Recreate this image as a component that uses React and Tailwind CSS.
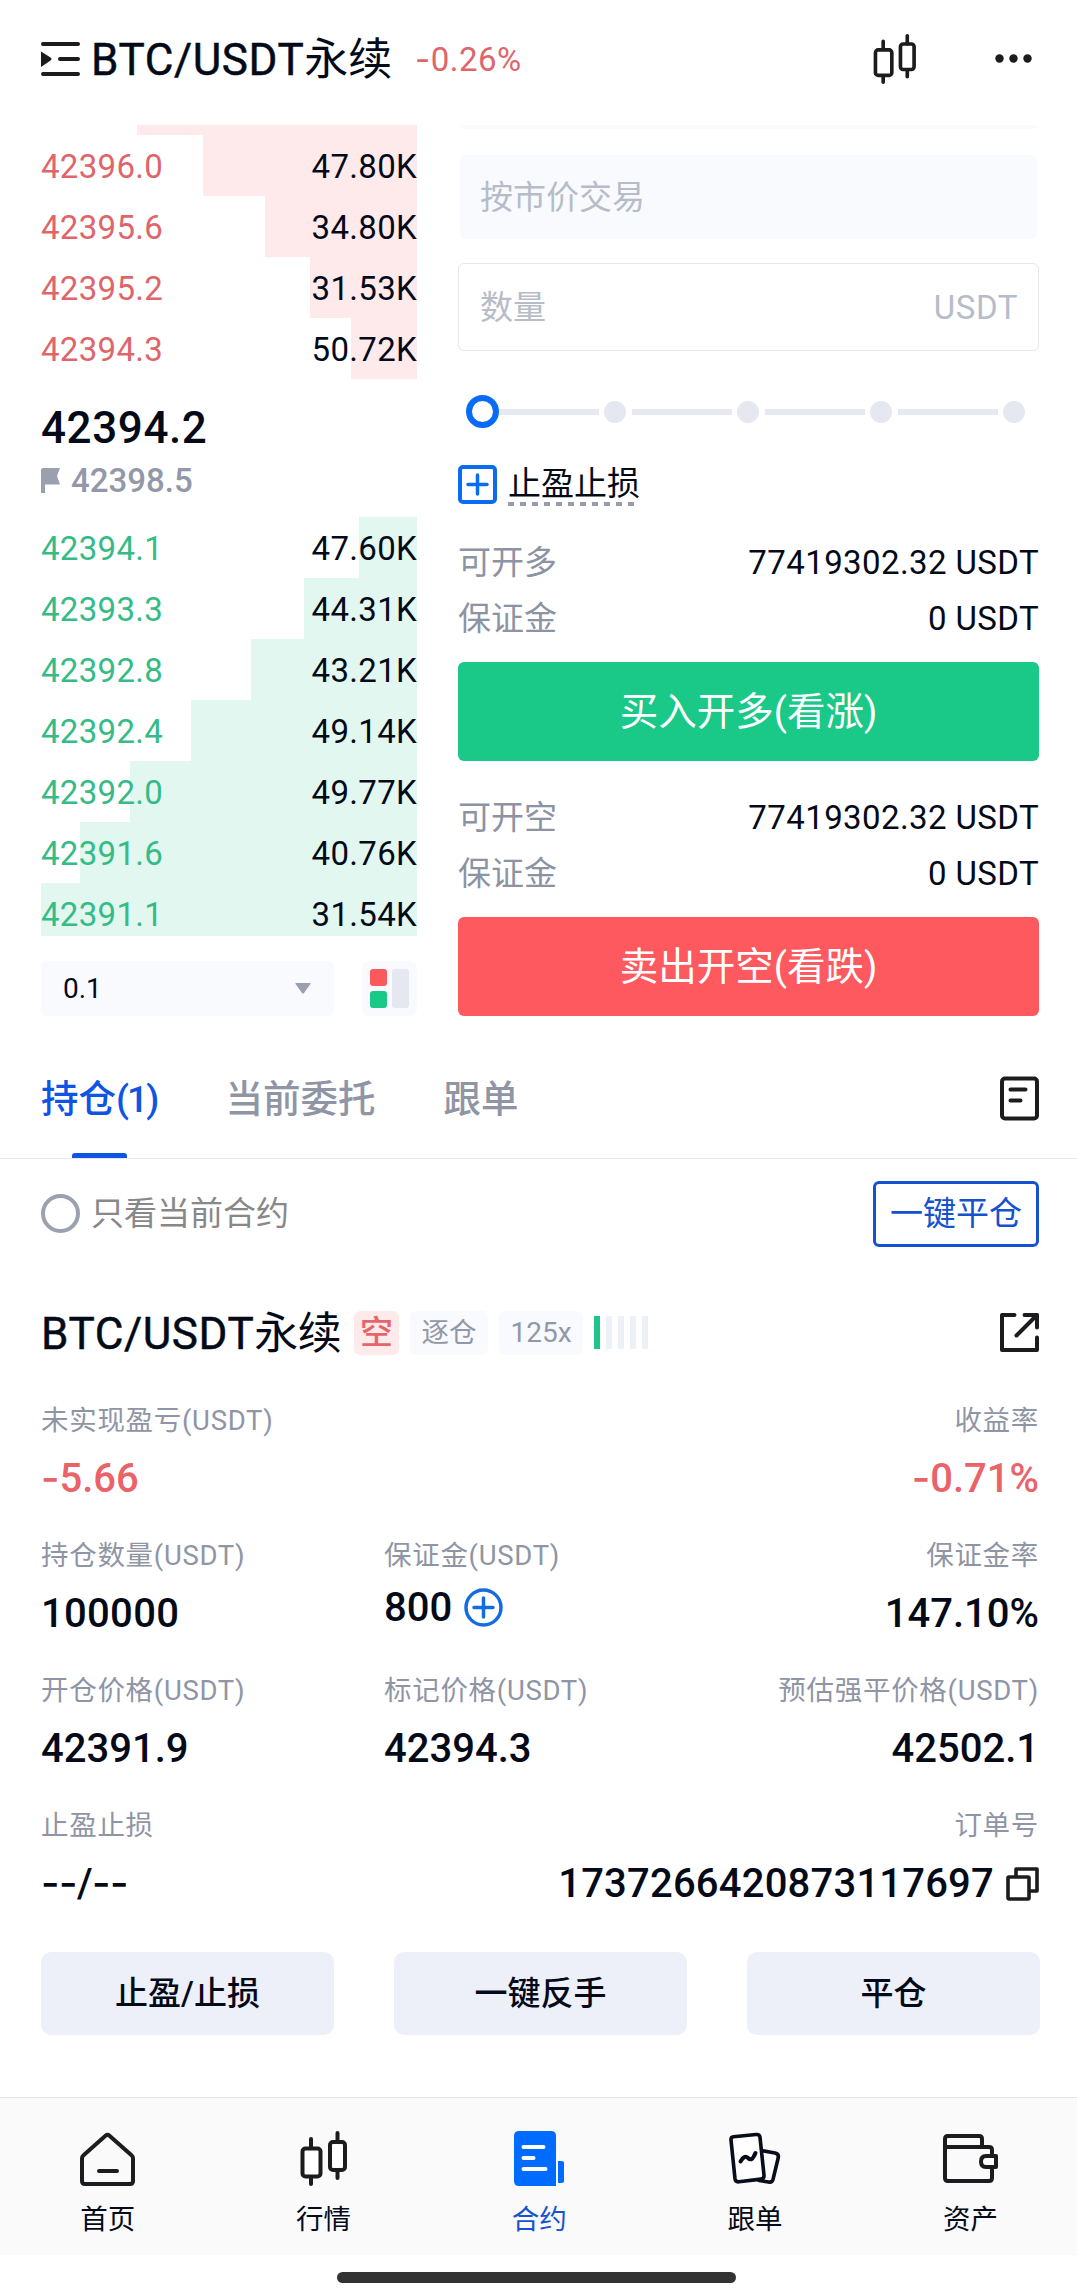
import React, { useState } from "react";

const asks = [
  { price: "42396.0", amount: "47.80K", depth: 214 },
  { price: "42395.6", amount: "34.80K", depth: 152 },
  { price: "42395.2", amount: "31.53K", depth: 107 },
  { price: "42394.3", amount: "50.72K", depth: 66 },
];

const bids = [
  { price: "42394.1", amount: "47.60K", depth: 58 },
  { price: "42393.3", amount: "44.31K", depth: 113 },
  { price: "42392.8", amount: "43.21K", depth: 166 },
  { price: "42392.4", amount: "49.14K", depth: 226 },
  { price: "42392.0", amount: "49.77K", depth: 287 },
  { price: "42391.6", amount: "40.76K", depth: 337 },
  { price: "42391.1", amount: "31.54K", depth: 376 },
];

const tabs = [{ name: "持仓", count: 1 }, { name: "当前委托" }, { name: "跟单" }];

function Candles({ className, fill = "none" }) {
  return (
    <svg viewBox="0 0 48 55" className={className} fill={fill} stroke="#1c1c1e" strokeWidth="4" strokeLinecap="round">
      <path d="M11 8v9M11 46v7M37.500 2v9M37.500 40v7" />
      <rect x="2.500" y="17.500" width="18" height="28" rx="3" />
      <rect x="30" y="11" width="15" height="28" rx="3" />
    </svg>
  );
}

// Inter has a wider hyphen than Roboto
function Dash({ children = "-" }) {
  return <span className="font-['Inter']">{children}</span>;
}

function BookRow({ row, side }) {
  const isAsk = side === "ask";
  return (
    <div className="relative h-[61px] pt-[2px] shrink-0 flex items-center justify-between tracking-[0.3px]">
      <div
        className={`absolute right-0 inset-y-0 ${isAsk ? "bg-[#ffeaeb]" : "bg-[#e2f7f0]"}`}
        style={{ width: row.depth }}
      />
      <span className={`relative ${isAsk ? "text-[#e0656a]" : "text-[#35bb86]"}`}>{row.price}</span>
      <span className="relative">{row.amount}</span>
    </div>
  );
}

function OrderBook() {
  return (
    <div className="w-[376px] shrink-0">
      <div className="h-[10px] w-[280px] ml-auto bg-[#ffeaeb]" />
      {asks.map((row) => (
        <BookRow key={row.price} row={row} side="ask" />
      ))}

      <div className="h-[138px] pt-[21px]">
        <div className="text-[44px] leading-[56px] font-medium tracking-[0.6px]">42394.2</div>
        <div className="flex items-center h-[49px] text-[#9298a7] font-medium">
          <svg viewBox="0 0 19 25" className="w-[19px] h-[25px] mr-[11px]" fill="#9aa0ae">
            <path d="M2 0h17l-3 8 3 8.500H4V23a2 2 0 0 1-4 2V2a2 2 0 0 1 2-2z" />
          </svg>
          42398.5
        </div>
      </div>

      <div className="h-[419px] overflow-hidden">
        {bids.map((row) => (
          <BookRow key={row.price} row={row} side="bid" />
        ))}
      </div>

      <div className="mt-[25px] flex justify-between">
        <button className="w-[293px] h-[55px] rounded-md bg-[#f9fafe] pl-[22px] pr-[23px] flex items-center justify-between text-[28px]">
          0.1
          <svg viewBox="0 0 16 11" className="w-4 h-[11px]" fill="#9aa0ae">
            <path d="M1 0h14q1 0 .5 1L9 10q-1 1-2 0L.5 1Q0 0 1 0z" />
          </svg>
        </button>
        <button className="w-[55px] h-[55px] rounded-lg bg-[#f9fafe] p-2 flex gap-[5px]">
          <span className="flex flex-col gap-[5px]">
            <span className="w-[17px] h-[17px] rounded-[3px] bg-[#fc595f]" />
            <span className="w-[17px] h-[17px] rounded-[3px] bg-[#1ac887]" />
          </span>
          <span className="w-[17px] h-[39px] rounded-[3px] bg-[#e5e8f1]" />
        </button>
      </div>
    </div>
  );
}

function InfoRow({ label, value }) {
  return (
    <div className="h-14 flex items-center justify-between">
      <span className="text-[#8c93a3]">{label}</span>
      <span className="tracking-[0.4px]">{value}</span>
    </div>
  );
}

function TradeForm() {
  return (
    <div className="flex-1 ml-[41px]">
      <div className="h-1 mx-[2px] rounded-b-md bg-[#f9fafe]" />
      <div className="mt-[26px] h-[84px] mx-[2px] px-5 rounded-md bg-[#f9fafe] flex items-center text-[#b6bcc8]">
        按市价交易
      </div>
      <div className="mt-6 h-[88px] pl-[21px] pr-5 rounded-md border border-[#e6e8ea] flex items-center justify-between text-[#b6bcc8]">
        <span>数量</span>
        <span className="tracking-[0.6px]">USDT</span>
      </div>

      {/* Leverage slider */}
      <div className="mt-11 h-[33px] ml-2 mr-[14px] flex items-center">
        <span className="w-[33px] h-[33px] rounded-full border-[6px] border-[#0a6cf5] bg-white" />
        {[0, 1, 2, 3].map((i) => (
          <React.Fragment key={i}>
            <span className={`flex-1 h-[6px] bg-[#e6e9f2] mr-[5px] ${i > 0 ? "ml-[6px]" : ""}`} />
            <span className="w-[22px] h-[22px] rounded-full bg-[#e5e8f1]" />
          </React.Fragment>
        ))}
      </div>

      <div className="mt-[37px] h-[39px] flex items-start">
        <svg viewBox="0 0 39 39" className="w-[39px] h-[39px] mr-[11px]" fill="none" stroke="#0a6cf0" strokeWidth="4">
          <rect x="2" y="2" width="35" height="35" rx="3" />
          <path d="M19.500 10v19M10 19.500h19" strokeWidth="3.500" strokeLinecap="round" />
        </svg>
        <div>
          <div className="leading-[37px]">止盈止损</div>
          <svg viewBox="0 0 130 4" className="block w-[130px] h-1" stroke="#979dab" strokeWidth="4">
            <path d="M0 2h129" strokeDasharray="6 6" />
          </svg>
        </div>
      </div>

      <div className="mt-[30px]">
        <InfoRow label="可开多" value="77419302.32 USDT" />
        <InfoRow label="保证金" value="0 USDT" />
      </div>
      <button className="mt-4 pt-[2px] block w-full h-[99px] rounded-md bg-[#1ac887] text-white text-[38.5px]">
        买入开多(看涨)
      </button>
      <div className="mt-7">
        <InfoRow label="可开空" value="77419302.32 USDT" />
        <InfoRow label="保证金" value="0 USDT" />
      </div>
      <button className="mt-4 pt-[2px] block w-full h-[99px] rounded-md bg-[#fd595f] text-white text-[38.5px]">
        卖出开空(看跌)
      </button>
    </div>
  );
}

function Cell({ label, children, className = "", valueClass = "" }) {
  return (
    <div className={`flex flex-col whitespace-nowrap ${className}`}>
      <span className="h-12 leading-[48px] text-[27.5px] tracking-[0.7px] text-[#8f95a5]">{label}</span>
      <span className={`flex items-center text-[40px] font-medium leading-none ${valueClass || "h-[67px]"}`}>
        {children}
      </span>
    </div>
  );
}

function Position() {
  return (
    <div className="pl-[41px] pr-[38px]">
      <div className="h-[129px] flex items-center">
        <span className="pt-[2px] text-[44px] tracking-[0.6px] leading-none [-webkit-text-stroke:0.5px]">
          BTC/USDT<span className="tracking-[-0.5px] [-webkit-text-stroke:0]">永续</span>
        </span>
        <span className="ml-auto w-[45px] h-11 rounded-md bg-[#ffeaeb] text-[#e5656a] font-medium flex items-center justify-center">
          空
        </span>
        <div className="w-[640px] flex items-center">
          <span className="ml-[11px] w-[78px] h-11 rounded-md bg-[#f9fafe] text-[#9298a7] text-[27.5px] flex items-center justify-center">
            逐仓
          </span>
          <span className="ml-[11px] w-[84px] h-11 rounded-md bg-[#f9fafe] text-[#9298a7] text-[28px] flex items-center justify-center">
            125x
          </span>
          <span className="ml-[11px] flex gap-[6px]">
            <span className="w-[6px] h-[33px] bg-[#1fc488]" />
            {[1, 2, 3, 4].map((i) => (
              <span key={i} className="w-[6px] h-[33px] bg-[#eef0f7]" />
            ))}
          </span>
          <svg viewBox="0 0 39 39" className="w-[39px] h-[39px] ml-auto" fill="none" stroke="#1c1c1e" strokeWidth="4" strokeLinecap="round" strokeLinejoin="round">
            <path d="M14.500 2H2v35h35V24.500" />
            <path d="M24.500 2H37v12.500M37 2 16.500 22.500" />
          </svg>
        </div>
      </div>

      <div className="h-[135px] flex justify-between">
        <Cell label="未实现盈亏(USDT)">
          <span className="text-[#e96368]"><Dash />5.66</span>
        </Cell>
        <Cell label="收益率" className="items-end">
          <span className="text-[#e96368]"><Dash />0.71%</span>
        </Cell>
      </div>
      <div className="h-[135px] flex">
        <Cell label="持仓数量(USDT)" className="w-[343px]">
          <span className="tracking-[0.3px]">100000</span>
        </Cell>
        <Cell label="保证金(USDT)" className="flex-1" valueClass="h-[54px]">
          <span className="pt-px">800</span>
          <svg viewBox="0 0 39 39" className="w-[39px] h-[39px] ml-[12px]" fill="none" stroke="#156be0" strokeWidth="3.500">
            <circle cx="19.500" cy="19.500" r="17.500" />
            <path d="M19.500 10v19M10 19.500h19" strokeLinecap="round" />
          </svg>
        </Cell>
        <Cell label="保证金率" className="items-end">147.10%</Cell>
      </div>
      <div className="h-[135px] flex">
        <Cell label="开仓价格(USDT)" className="w-[343px]">42391.9</Cell>
        <Cell label="标记价格(USDT)" className="flex-1">42394.3</Cell>
        <Cell label="预估强平价格(USDT)" className="items-end">42502.1</Cell>
      </div>
      <div className="h-[135px] flex justify-between">
        <Cell label="止盈止损">
          <span className="tracking-[-0.5px]"><Dash>--</Dash>/<Dash>--</Dash></span>
        </Cell>
        <Cell label="订单号" className="items-end">
          <span className="tracking-[0.2px]">1737266420873117697</span>
          <svg viewBox="0 0 33 34" className="w-[33px] h-[34px] ml-[12px]" fill="none" stroke="#1c1c1e" strokeWidth="3.600" strokeLinejoin="round">
            <rect x="2" y="10" width="21" height="22" rx="1" />
            <path d="M10 10V2h21v22h-8" />
          </svg>
        </Cell>
      </div>

      <div className="mt-[15px] -mr-px flex justify-between">
        {["止盈/止损", "一键反手", "平仓"].map((label) => (
          <button key={label} className="w-[293px] h-[83px] rounded-[10px] bg-[#edf0f8] font-medium">
            {label}
          </button>
        ))}
      </div>
    </div>
  );
}

function NavItem({ label, active, children }) {
  return (
    <button className={`w-[215.7px] shrink-0 pt-[33px] flex flex-col items-center ${active ? "text-[#1652d0]" : ""}`}>
      {children}
      <span className="mt-[15px] text-[27.5px] leading-[38px]">{label}</span>
    </button>
  );
}

function BottomNav() {
  return (
    <nav className="mt-[62px] h-[158px] border-t border-[#e5e7ea] bg-[#fafafb] flex">
      <NavItem label="首页">
        <svg viewBox="0 0 55 55" className="w-[55px] h-[55px]" fill="none" stroke="#1c1c1e" strokeWidth="4" strokeLinejoin="round" strokeLinecap="round">
          <path d="M2 27.500q0-2 1.500-3.200L25.500 4.700q2-1.700 4 0L51.500 24.300Q53 25.500 53 27.500V50q0 3-3 3H5q-3 0-3-3z" />
          <path d="M19 40h18" />
        </svg>
      </NavItem>
      <NavItem label="行情">
        <Candles className="w-12 h-[55px]" fill="#fff" />
      </NavItem>
      <NavItem label="合约" active>
        <svg viewBox="0 0 50 55" className="w-[50px] h-[55px]" fill="#006bff">
          <path d="M5 0h32q5 0 5 5v50H5q-5 0-5-5V5q0-5 5-5z" />
          <path d="M44 30h3q4 0 4 4v14q0 4-4 4h-3z" />
          <path d="M9.500 16h20M9.500 27h10M9.500 38h22" stroke="#fff" strokeWidth="4" strokeLinecap="round" />
        </svg>
      </NavItem>
      <NavItem label="跟单">
        <svg viewBox="0 0 52 55" className="w-[52px] h-[55px]" stroke="#090d1a" strokeWidth="3.600" strokeLinejoin="round" strokeLinecap="round">
          <path d="M32 19.500 46 22q4 1 3.300 4.500L44 48.500Q43 51.800 39.500 51L30 49.500" fill="none" />
          <path d="M4.500 5.800 27 3.500q3.500-.4 4 2.800l4 38q.3 3.400-3 3.800L10 50.800q-3.500.4-4-3L2 9q-.3-2.800 2.500-3.200z" fill="#fff" />
          <path d="M11.500 30.500q4-7 7.500-3.500t6-2l1.500-3" fill="none" strokeWidth="4" />
        </svg>
      </NavItem>
      <NavItem label="资产">
        <svg viewBox="0 0 55 55" className="w-[55px] h-[55px]" fill="none" stroke="#1c1c1e" strokeWidth="4" strokeLinejoin="round" strokeLinecap="round">
          <path d="M2 16V8q0-3 3-3h31q3 0 3 3v8" />
          <path d="M49 24v-5q0-3-3-3H2v31q0 3 3 3h41q3 0 3-3V37" />
          <path d="M53 25H43q-5 0-5 5.500t5 5.500h10z" fill="#fff" />
        </svg>
      </NavItem>
    </nav>
  );
}

export default function App() {
  const [activeTab, setActiveTab] = useState(0);

  return (
    <div className="w-[1077px] h-[2294px] bg-white overflow-hidden text-[33px] leading-none text-[#050a18] font-['Roboto','Noto_Sans_CJK_SC',sans-serif]">
      {/* Header */}
      <header className="h-[117px] mb-2 pl-[41px] pr-[45px] flex items-center">
        <svg viewBox="0 0 39 34" className="w-[39px] h-[34px]" fill="none" stroke="#1c1c1e" strokeWidth="4" strokeLinecap="round">
          <path d="M2 2h35M19 17h18M2 32h35" />
          <path d="M0 9.500 9.500 15.500q2 1.500 0 3L0 25z" fill="#1c1c1e" stroke="none" />
        </svg>
        <h1 className="w-[300px] pl-[11px] pt-[2px] text-[44px] tracking-[0.6px] whitespace-nowrap [-webkit-text-stroke:0.5px]">
          BTC/USDT<span className="tracking-normal [-webkit-text-stroke:0]">永续</span>
        </h1>
        <span className="ml-[35px] pt-[2px] tracking-[0.5px] text-[#e0656a]"><Dash />0.26%</span>
        <Candles className="w-[44px] h-[50px] ml-auto" />
        <svg viewBox="0 0 37 9" className="w-[37px] h-[9px] ml-[78px]" fill="#1c1c1e">
          <circle cx="4.500" cy="4.500" r="4.200" />
          <circle cx="18.500" cy="4.500" r="4.200" />
          <circle cx="32.500" cy="4.500" r="4.200" />
        </svg>
      </header>

      <main className="pl-[41px] pr-[38px] flex">
        <OrderBook />
        <TradeForm />
      </main>

      {/* Tabs */}
      <div className="h-[143px] pl-[41px] pr-[38px] border-b border-[#e6e8ea] flex gap-[68px] text-[37.5px] font-medium">
        {tabs.map((tab, i) => (
          <button
            key={tab.name}
            onClick={() => setActiveTab(i)}
            className={`pt-[63px] flex flex-col items-center ${activeTab === i ? "text-[#0f54e3]" : "text-[#8f95a5]"}`}
          >
            <span className="leading-10">
              {tab.name}
              {tab.count && <span className="tracking-[-2px]">({tab.count})</span>}
            </span>
            {activeTab === i && <span className="mt-auto w-[55px] h-[5px] rounded-t-[3px] bg-[#0f54e3]" />}
          </button>
        ))}
        <svg viewBox="0 0 39 45" className="w-[39px] h-[45px] ml-auto mt-[60px]" fill="none" stroke="#1c1c1e" strokeWidth="4" strokeLinecap="round">
          <rect x="2" y="2.500" width="35" height="40" rx="3" />
          <path d="M10.500 13.500h15M10.500 24.500h10" />
        </svg>
      </div>

      <div className="h-[109px] pl-[41px] pr-[38px] flex items-center">
        <span className="w-[39px] h-[39px] rounded-full border-4 border-[#9aa1af]" />
        <span className="ml-[11px] text-[#888]">只看当前合约</span>
        <button className="ml-auto w-[166px] h-[66px] rounded-md border-[3px] border-[#1652d0] text-[#1652d0]">
          一键平仓
        </button>
      </div>

      <Position />
      <BottomNav />
      <div className="mt-[17px] ml-[337px] w-[399px] h-[11px] rounded-full bg-[#333]" />
    </div>
  );
}
